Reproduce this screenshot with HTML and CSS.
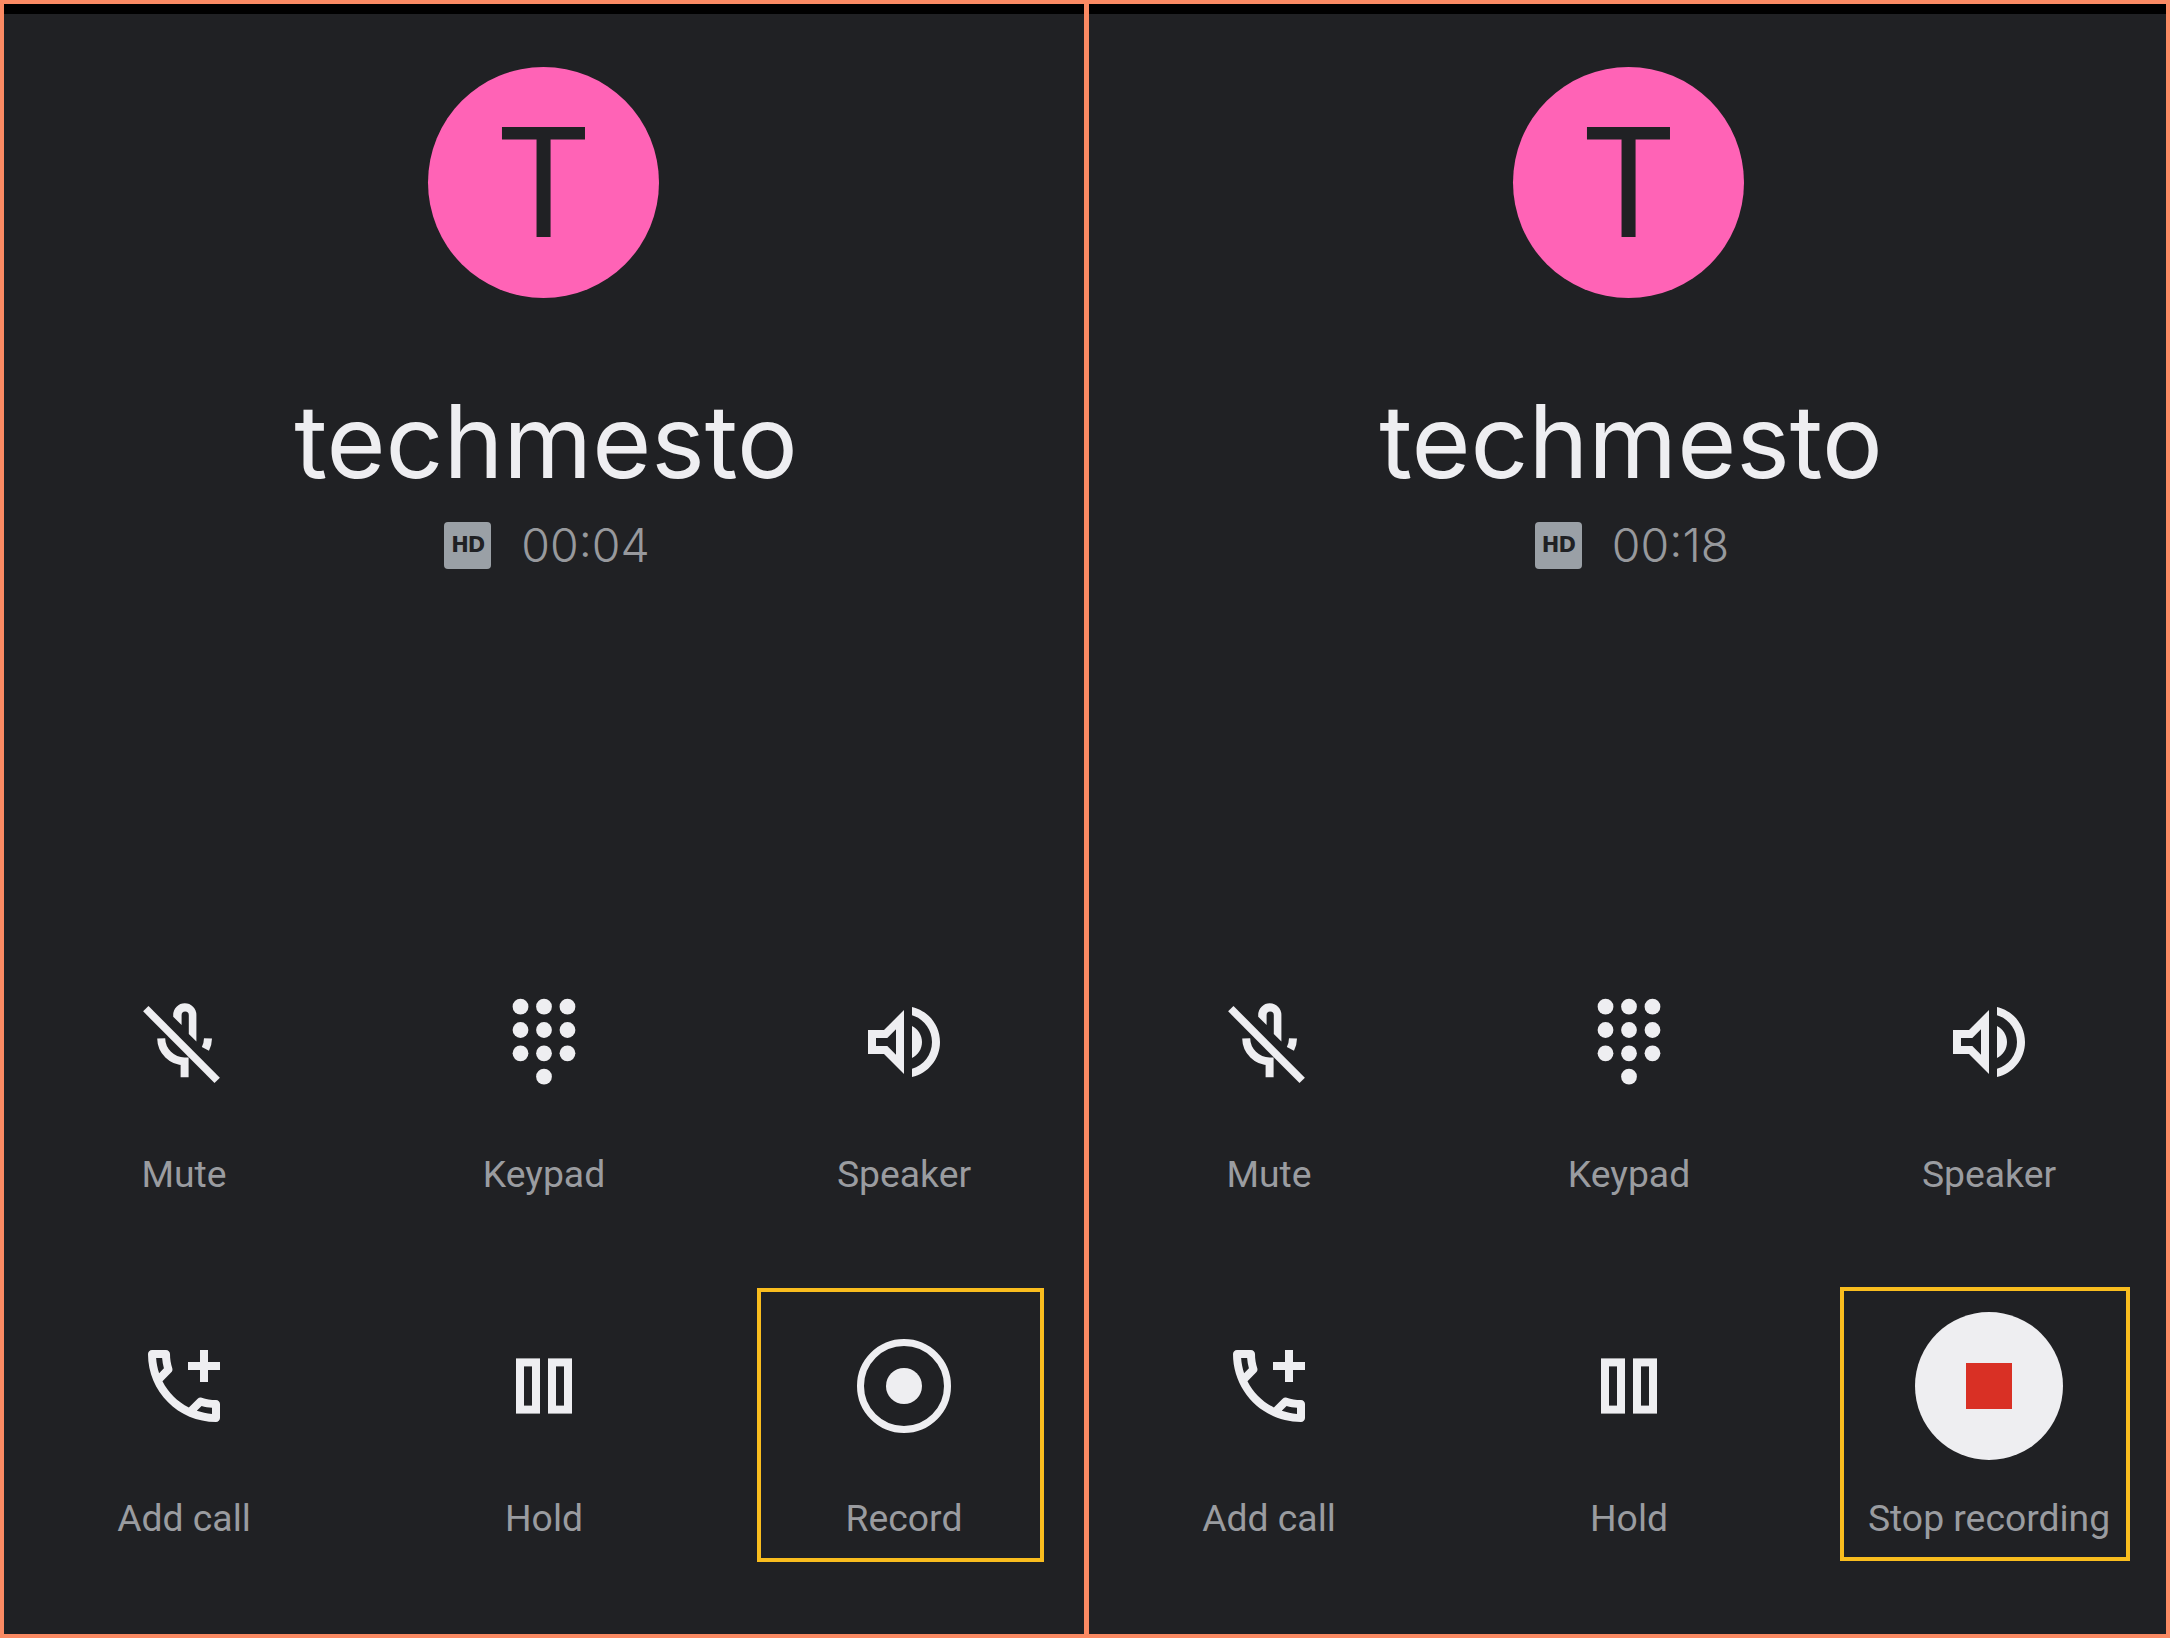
FILE: index.html
```html
<!DOCTYPE html>
<html lang="en">
<head>
    <meta charset="UTF-8">
    <title>Call recording</title>
    <link rel="stylesheet" href="styles.css">
</head>
<body>
    <div class="frame">
        <div class="phone">
            <div class="statusbar"></div>
            <div class="avatar">T</div>
            <div class="name">techmesto</div>
            <div class="callinfo"><span class="hd">HD</span><span class="timer">00:04</span></div>
            <div class="controls">
                <div class="control">
                    <svg class="icon" viewBox="0 0 24 24"><use href="#i-mute"/></svg>
                    <div class="label">Mute</div>
                </div>
                <div class="control">
                    <svg class="icon" viewBox="0 0 24 24"><use href="#i-keypad"/></svg>
                    <div class="label">Keypad</div>
                </div>
                <div class="control">
                    <svg class="icon" viewBox="0 0 24 24"><use href="#i-speaker"/></svg>
                    <div class="label">Speaker</div>
                </div>
                <div class="control">
                    <svg class="icon" viewBox="0 0 24 24"><use href="#i-addcall"/></svg>
                    <div class="label">Add call</div>
                </div>
                <div class="control">
                    <svg class="icon" viewBox="0 0 24 24"><use href="#i-hold"/></svg>
                    <div class="label">Hold</div>
                </div>
                <div class="control">
                    <div class="highlight highlight-record"></div>
                    <div class="icon-slot"><div class="record-ring"><div class="record-dot"></div></div></div>
                    <div class="label">Record</div>
                </div>
            </div>
        </div>
        <div class="divider"></div>
        <div class="phone">
            <div class="statusbar"></div>
            <div class="avatar">T</div>
            <div class="name">techmesto</div>
            <div class="callinfo"><span class="hd">HD</span><span class="timer">00:18</span></div>
            <div class="controls">
                <div class="control">
                    <svg class="icon" viewBox="0 0 24 24"><use href="#i-mute"/></svg>
                    <div class="label">Mute</div>
                </div>
                <div class="control">
                    <svg class="icon" viewBox="0 0 24 24"><use href="#i-keypad"/></svg>
                    <div class="label">Keypad</div>
                </div>
                <div class="control">
                    <svg class="icon" viewBox="0 0 24 24"><use href="#i-speaker"/></svg>
                    <div class="label">Speaker</div>
                </div>
                <div class="control">
                    <svg class="icon" viewBox="0 0 24 24"><use href="#i-addcall"/></svg>
                    <div class="label">Add call</div>
                </div>
                <div class="control">
                    <svg class="icon" viewBox="0 0 24 24"><use href="#i-hold"/></svg>
                    <div class="label">Hold</div>
                </div>
                <div class="control">
                    <div class="highlight highlight-stop"></div>
                    <div class="icon-slot"><div class="stop-btn"><div class="stop-square"></div></div></div>
                    <div class="label">Stop recording</div>
                </div>
            </div>
        </div>
    </div>

    <!-- shared icons -->
    <svg class="defs" width="0" height="0">
        <symbol id="i-mute" viewBox="0 0 24 24">
            <path fill="currentColor" d="M9.3 5.67V5.23a2.9 2.9 0 0 1 5.8 0V11.9L13.2 10V5.3a.9.9 0 0 0-1.8 0V7.75z"/>
            <path fill="none" stroke="currentColor" stroke-width="2" d="M6.3 11.1a5.85 5.85 0 0 0 5.85 5.75v3.95M18 11.1a5.85 5.85 0 0 1-.65 2.6"/>
            <path fill="none" stroke="currentColor" stroke-width="1.9" d="M2.45 3.67L20.3 21.6"/>
        </symbol>
        <symbol id="i-keypad" viewBox="0 0 24 24">
            <g fill="currentColor">
                <circle cx="6.13" cy="3.17" r="1.97"/><circle cx="12" cy="3.17" r="1.97"/><circle cx="17.87" cy="3.17" r="1.97"/>
                <circle cx="6.13" cy="9" r="1.97"/><circle cx="12" cy="9" r="1.97"/><circle cx="17.87" cy="9" r="1.97"/>
                <circle cx="6.13" cy="14.83" r="1.97"/><circle cx="12" cy="14.83" r="1.97"/><circle cx="17.87" cy="14.83" r="1.97"/>
                <circle cx="12" cy="20.67" r="1.97"/>
            </g>
        </symbol>
        <symbol id="i-speaker" viewBox="0 0 24 24">
            <path fill="currentColor" d="M3 9v6h4l5 5V4L7 9H3zm7-.17v6.34L7.83 13H5v-2h2.83L10 8.83zM16.5 12c0-1.77-1.02-3.29-2.5-4.03v8.05c1.48-.73 2.5-2.25 2.5-4.02zM14 3.23v2.06c2.89.86 5 3.54 5 6.71s-2.11 5.85-5 6.71v2.06c4.01-.91 7-4.49 7-8.77 0-4.28-2.99-7.86-7-8.77z"/>
        </symbol>
        <symbol id="i-addcall" viewBox="0 0 24 24">
            <path fill="currentColor" d="M20 15.5c-1.25 0-2.45-.2-3.57-.57-.1-.03-.21-.05-.31-.05-.26 0-.51.1-.71.29l-2.2 2.2c-2.83-1.44-5.15-3.75-6.59-6.58l2.2-2.21c.28-.27.36-.66.25-1.01C8.7 6.45 8.5 5.25 8.5 4c0-.55-.45-1-1-1H4c-.55 0-1 .45-1 1 0 9.39 7.61 17 17 17 .55 0 1-.45 1-1v-3.5c0-.55-.45-1-1-1zM5.03 5h1.5c.07.88.22 1.75.45 2.58l-1.2 1.21c-.4-1.21-.66-2.47-.75-3.79zM19 18.97c-1.32-.09-2.6-.35-3.8-.76l1.2-1.2c.85.24 1.72.39 2.6.4v1.56zM18 6V3h-2v3h-3v2h3v3h2V8h3V6z"/>
        </symbol>
        <symbol id="i-hold" viewBox="0 0 24 24">
            <g fill="none" stroke="currentColor" stroke-width="2">
                <rect x="6" y="6.1" width="4" height="11.8"/>
                <rect x="14" y="6.1" width="4" height="11.8"/>
            </g>
        </symbol>
    </svg>
</body>
</html>
```

FILE: styles.css
```css
body {
    margin: 0;
    background-color: #202124;
}

.frame {
    display: flex;
    width: 2170px;
    height: 1638px;
    box-sizing: border-box;
    border: 4px solid #fb8a63;
    overflow: hidden;
}

.divider {
    flex: 0 0 5px;
    background-color: #fb8a63;
}

.phone {
    flex: 0 0 1080px;
    min-width: 0;
    display: flex;
    flex-direction: column;
    background-color: #202124;
    color: #eeeef1;
}

.phone:last-child {
    flex-basis: 1077px;
}

.statusbar {
    flex-shrink: 0;
    height: 10px;
    background-color: #000000;
}

.avatar {
    flex-shrink: 0;
    width: 231px;
    height: 231px;
    margin: 53px 0 0 424px;
    border-radius: 50%;
    background-color: #ff63b6;
    color: #202124;
    font-family: Inter, sans-serif;
    font-size: 151px;
    line-height: 230px;
    text-align: center;
}

.name {
    flex-shrink: 0;
    width: 1080px;
    margin: 83px 0 0 2px;
    font-family: Inter, sans-serif;
    font-size: 101.4px;
    line-height: 120px;
    text-align: center;
}

.callinfo {
    display: flex;
    flex-shrink: 0;
    justify-content: center;
    align-items: center;
    gap: 30px;
    width: 1080px;
    margin: 21px 0 0 3px;
    height: 47px;
}

.hd {
    width: 47px;
    height: 47px;
    border-radius: 4px;
    background-color: #9aa0a6;
    color: #202124;
    font-family: "DejaVu Sans", sans-serif;
    font-size: 21px;
    font-weight: bold;
    letter-spacing: -1px;
    line-height: 47px;
    text-align: center;
}

.timer {
    padding-bottom: 2px;
    font-family: Inter, sans-serif;
    font-size: 46.5px;
    font-weight: 300;
    color: #97999d;
}

.controls {
    display: grid;
    flex-shrink: 0;
    grid-template-columns: repeat(3, 360px);
    grid-template-rows: 344px auto;
    margin-top: 425px;
}

.control {
    position: relative;
    display: flex;
    flex-direction: column;
    align-items: center;
}

.icon, .icon-slot {
    width: 96px;
    height: 96px;
    flex-shrink: 0;
}

.icon-slot {
    display: flex;
    justify-content: center;
    align-items: center;
}

.label {
    margin-top: 60px;
    font-family: Roboto, sans-serif;
    font-size: 37.3px;
    line-height: 48px;
    color: #9a9ca0;
    white-space: nowrap;
}

.record-ring {
    display: flex;
    justify-content: center;
    align-items: center;
    flex-shrink: 0;
    width: 94px;
    height: 94px;
    box-sizing: border-box;
    border: 7px solid #eeeef1;
    border-radius: 50%;
}

.record-dot {
    width: 36px;
    height: 36px;
    border-radius: 50%;
    background-color: #eeeef1;
}

.stop-btn {
    display: flex;
    justify-content: center;
    align-items: center;
    flex-shrink: 0;
    width: 148px;
    height: 148px;
    border-radius: 50%;
    background-color: #eeeef1;
}

.stop-square {
    width: 46px;
    height: 46px;
    background-color: #d93025;
}

.highlight {
    position: absolute;
    box-sizing: border-box;
    border: 4px solid #f9bd1e;
}

.highlight-record {
    left: 33px;
    top: -50px;
    width: 287px;
    height: 274px;
}

.highlight-stop {
    left: 31px;
    top: -51px;
    width: 290px;
    height: 274px;
}

.defs {
    position: absolute;
}
```
